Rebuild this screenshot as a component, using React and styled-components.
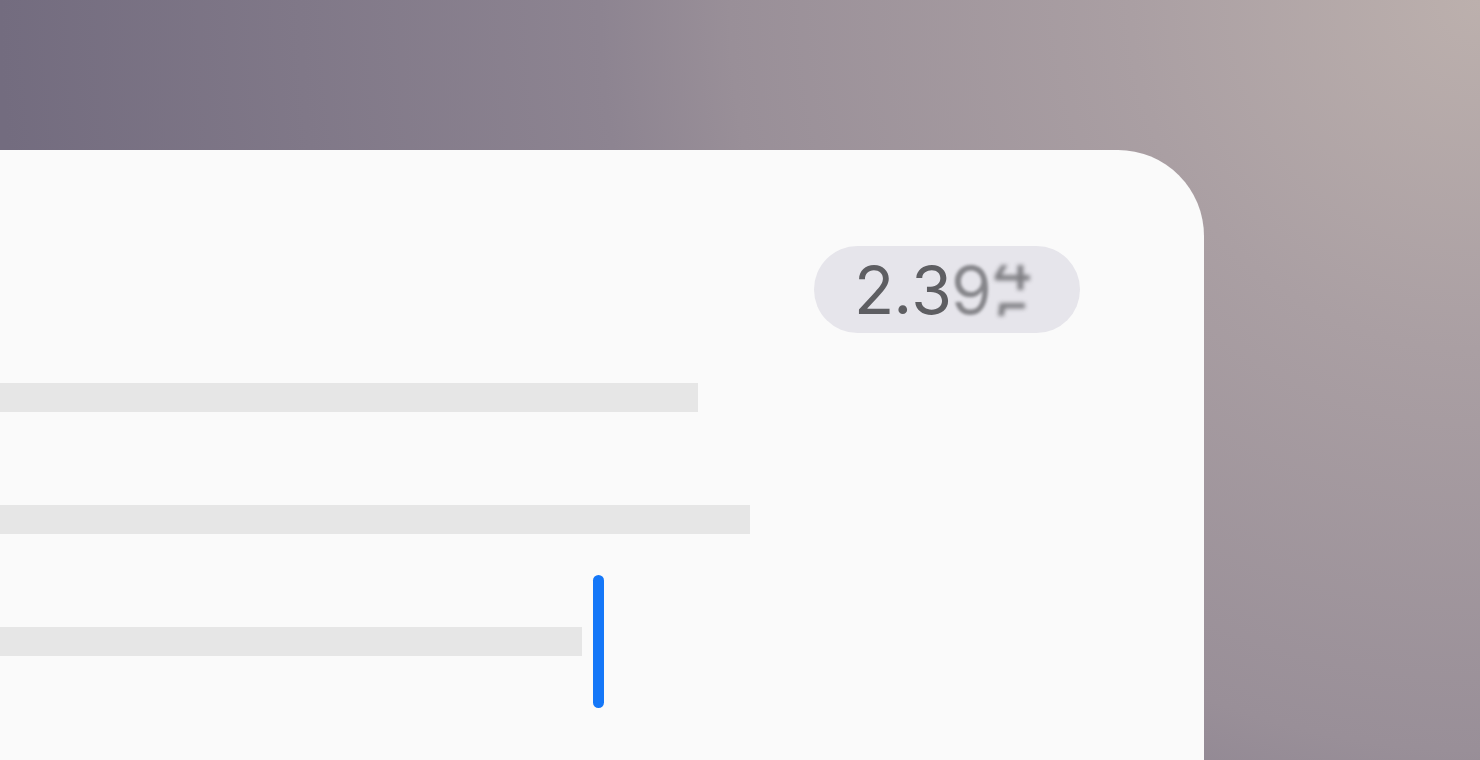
import React from 'react';
import styled, { createGlobalStyle } from 'styled-components';

const GlobalStyle = createGlobalStyle`
  html, body {
    margin: 0;
    padding: 0;
    height: 100%;
    overflow: hidden;
  }
  #root {
    height: 100%;
  }
`;

const Scene = styled.div`
  height: 760px;
  width: 1480px;
  padding-top: 150px;
  box-sizing: border-box;
  background: radial-gradient(
    circle at 100% 0%,
    #bcb0ad 0px,
    #aa9fa3 350px,
    #998f98 750px,
    #8d8491 880px,
    #736c7f 1480px
  );
  font-family: Inter, 'Noto Sans', 'Liberation Sans', sans-serif;
`;

const Sheet = styled.div`
  width: 1204px;
  height: 610px;
  box-sizing: border-box;
  background: #fafafa;
  border-top-right-radius: 86px;
  padding: 96px 124px 0 0;
  display: flex;
  flex-direction: column;
`;

const Header = styled.div`
  display: flex;
  justify-content: flex-end;
`;

const Badge = styled.div`
  width: 266px;
  height: 87px;
  box-sizing: border-box;
  border-radius: 44px;
  background: #e6e5eb;
  display: flex;
  align-items: center;
  padding-left: 40px;
  color: #5e5e62;
  font-size: 66px;
  line-height: 66px;
  letter-spacing: -1px;
`;

const Digit = styled.span`
  display: inline-block;
  height: 66px;
  ${(p) => p.blurred && `
    filter: blur(1.8px);
    opacity: 0.7;
  `}
`;

// the last digit is mid-roll: bottom of the old digit above the top of the next
const RollWindow = styled.span`
  display: inline-block;
  height: 51px;
  margin-top: 19px;
  align-self: flex-start;
  overflow: hidden;
  filter: blur(1.9px);
  opacity: 0.75;
`;

const RollStack = styled.span`
  display: flex;
  flex-direction: column;
  line-height: 61px;
  transform: translateY(${(p) => p.offset}px);
`;

const Lines = styled.div`
  margin-top: 3px;
  display: flex;
  flex-direction: column;
`;

const Row = styled.div`
  height: 122px;
  display: flex;
  align-items: center;
  gap: 11px;
`;

const Bar = styled.div`
  height: 29px;
  width: ${(p) => p.w}px;
  background: #e6e6e6;
`;

const Caret = styled.div`
  width: 11px;
  height: 133px;
  flex-shrink: 0;
  border-radius: 6px;
  background: #1477f8;
`;

function RollingCounter() {
  return (
    <Badge>
      <Digit>2</Digit>
      <Digit>.</Digit>
      <Digit>3</Digit>
      <Digit blurred>9</Digit>
      <RollWindow>
        <RollStack offset={-29.5}>
          <span>4</span>
          <span>5</span>
        </RollStack>
      </RollWindow>
    </Badge>
  );
}

export default function App() {
  return (
    <>
      <GlobalStyle />
      <Scene>
        <Sheet>
          <Header>
            <RollingCounter />
          </Header>
          <Lines>
            <Row>
              <Bar w={698} />
            </Row>
            <Row>
              <Bar w={750} />
            </Row>
            <Row>
              <Bar w={582} />
              <Caret />
            </Row>
          </Lines>
        </Sheet>
      </Scene>
    </>
  );
}
